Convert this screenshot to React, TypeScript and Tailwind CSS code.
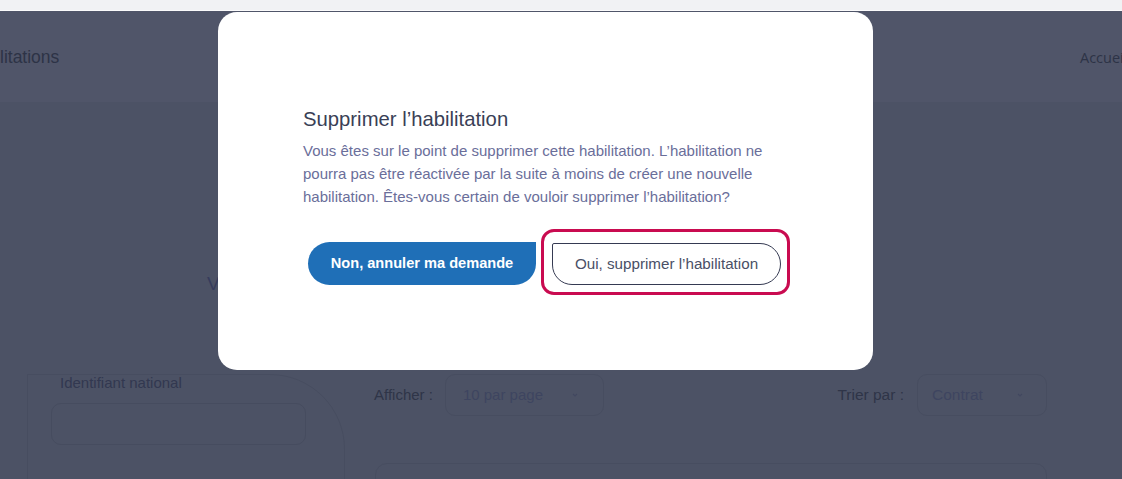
import React from "react";

function Chevron() {
  return (
    <svg width="8" height="6" viewBox="0 0 8 6" fill="none">
      <path d="M2 2 L4 4 L6 2" stroke="#424860" strokeWidth="1.1" />
    </svg>
  );
}

export default function App() {
  return (
    <div className="relative w-[1122px] h-[479px] overflow-hidden flex flex-col font-['Liberation_Sans',Arial,sans-serif]">
      <div className="h-[11px] bg-[#f1f2f4] border-b border-[#fbfbfc] shrink-0" />
      <div className="h-[91px] shrink-0 bg-[#505569] flex items-center overflow-hidden">
        <span className="text-[17.5px] text-[#2d3346] mt-[1px]">litations</span>
        <span className="ml-auto mr-[-10px] text-[14.5px] text-[#2d3346] font-['Open_Sans',sans-serif] w-[52px] whitespace-nowrap mt-[2px]">Accueil</span>
      </div>
      <div className="flex-1 bg-[#4c5265]">
        <div className="pl-[207px] pt-[170px] text-[19px] leading-[24px] text-[#363c5c]">V</div>
        <div className="flex mt-[78px]">
          <div className="ml-[27px] w-[318px] h-[200px] border border-[#474d60] rounded-tr-[75px]">
            <div className="pl-[32px] text-[15px] leading-[16px] text-[#323850]">Identifiant national</div>
            <div className="ml-[23px] mt-[12px] w-[255px] h-[42px] border border-[#464c5f] rounded-[10px]" />
          </div>
          <div className="ml-[29px] w-[673px]">
            <div className="flex items-center h-[42px]">
              <span className="text-[15px] text-[#2f3548]">Afficher :</span>
              <div className="ml-[12px] w-[159px] h-[42px] border border-[#474d60] rounded-[10px] flex items-center pl-[17px] pr-[24px] justify-between">
                <span className="text-[15px] text-[#3e4560]">10 par page</span>
                <Chevron />
              </div>
              <span className="ml-auto text-[15.5px] text-[#2f3548]">Trier par :</span>
              <div className="ml-[13px] w-[130px] h-[42px] border border-[#474d60] rounded-[10px] flex items-center pl-[14px] pr-[22px] justify-between">
                <span className="text-[15.5px] text-[#3e4560]">Contrat</span>
                <Chevron />
              </div>
            </div>
            <div className="mt-[47px] ml-[1px] w-[672px] h-[40px] border border-[#474d60] rounded-[12px]" />
          </div>
        </div>
      </div>

      <div className="absolute left-[218px] top-[12px] w-[655px] h-[358px] bg-white rounded-[19px] pl-[85px] pt-[95px]">
        <h2 className="text-[20.3px] leading-[24px] text-[#3a3f56]">Supprimer l’habilitation</h2>
        <p className="mt-[8px] w-[480px] text-[15px] leading-[23px] text-[#6a6e9a]">
          Vous êtes sur le point de supprimer cette habilitation. L’habilitation ne pourra pas être réactivée par la suite à moins de créer une nouvelle habilitation. Êtes-vous certain de vouloir supprimer l’habilitation?
        </p>
        <div className="flex items-start mt-[34px] ml-[5px]">
          <button className="w-[228px] h-[43px] bg-[#1f6fb7] text-white text-[14.6px] font-bold rounded-l-[22px] rounded-br-[22px] rounded-tr-none">
            Non, annuler ma demande
          </button>
          <div className="relative ml-[16px] mt-[1px]">
            <div className="absolute -left-[11px] -top-[14px] -right-[9px] -bottom-[10px] border-[3px] border-[#c90b50] rounded-[13px]" />
            <button className="relative w-[229px] h-[42px] border border-[#353a52] text-[#4a4f66] text-[15.2px] rounded-tl-[2px] rounded-bl-[20px] rounded-r-[21px] bg-white">
              Oui, supprimer l’habilitation
            </button>
          </div>
        </div>
      </div>
    </div>
  );
}
